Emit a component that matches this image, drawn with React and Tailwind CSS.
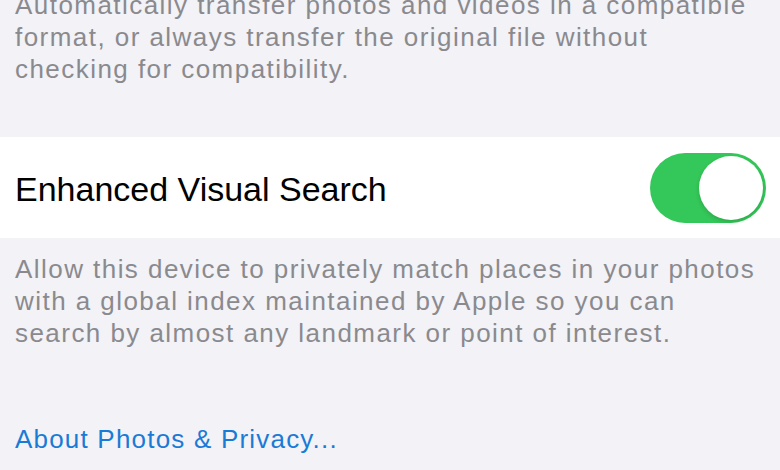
import React from "react";

export default function App() {
  return (
    <div
      className="w-[780px] h-[470px] overflow-hidden bg-[#f2f2f7]"
      style={{ fontFamily: '"Liberation Sans", Arial, sans-serif' }}
    >
      <p className="-mt-[11px] px-[15px] text-[26px] leading-[32px] text-[#8a8a8e] tracking-[1.45px] whitespace-nowrap">
        Automatically transfer photos and videos in a compatible
        <br />
        format, or always transfer the original file without
        <br />
        checking for compatibility.
      </p>

      <div className="mt-[52px] h-[101px] bg-white flex items-center justify-between pl-[15px] pr-[14px]">
        <span className="text-[34px] text-black pt-[3px]">
          Enhanced Visual Search
        </span>
        <div className="w-[116px] h-[70px] rounded-full bg-[#34c759] flex items-center justify-end pr-[3px]">
          <div className="w-[64px] h-[64px] rounded-full bg-white shadow-[0_2px_4px_rgba(0,0,0,0.15)]" />
        </div>
      </div>

      <p className="mt-[15px] px-[15px] text-[26px] leading-[32px] text-[#8a8a8e] tracking-[1.45px] whitespace-nowrap">
        Allow this device to privately match places in your photos
        <br />
        with a global index maintained by Apple so you can
        <br />
        search by almost any landmark or point of interest.
      </p>

      <div className="mt-[74px] px-[15px] text-[26px] leading-[32px] text-[#1a7bd6] tracking-[1.2px]">
        About Photos &amp; Privacy...
      </div>
    </div>
  );
}
